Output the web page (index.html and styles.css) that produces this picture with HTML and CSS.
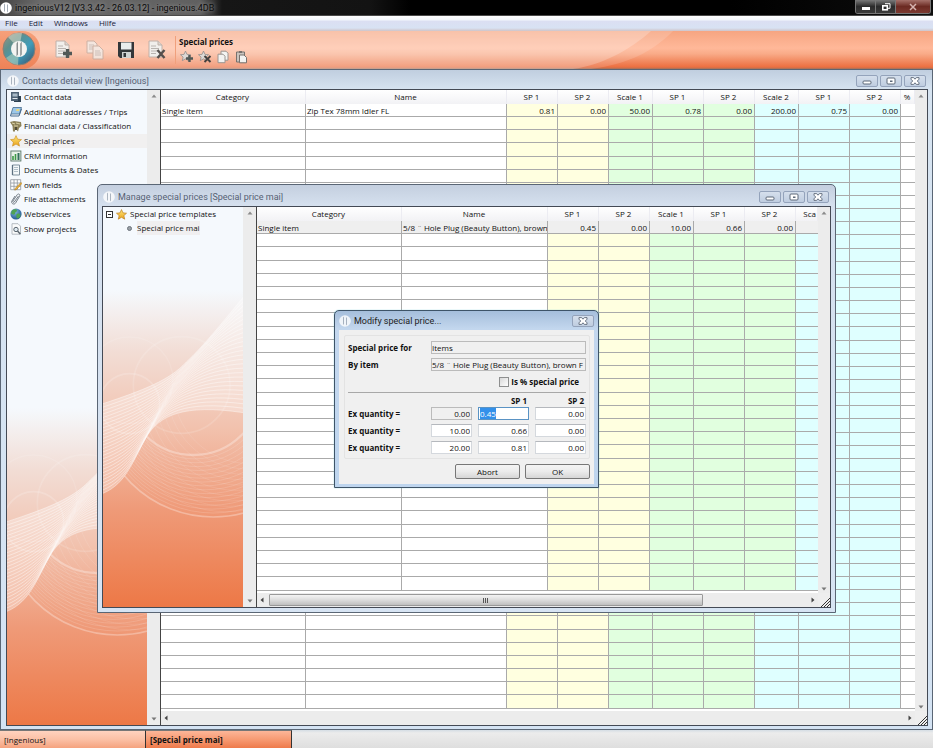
FILE: index.html
```html
<!DOCTYPE html>
<html lang="en">
<head>
<meta charset="utf-8">
<title>ingeniousV12 [V3.3.42 - 26.03.12] - ingenious.4DB</title>
<link rel="stylesheet" href="styles.css">
</head>
<body>
<svg class="defs" aria-hidden="true">
  <defs>
    <linearGradient id="disc" x1="0" y1="0" x2="1" y2="1"><stop offset="0" stop-color="#9a9a88"/><stop offset=".3" stop-color="#5f8f8c"/><stop offset=".6" stop-color="#3f9dbb"/><stop offset="1" stop-color="#3b4a62"/></linearGradient>
    <linearGradient id="gold" x1="0" y1="0" x2="0" y2="1"><stop offset="0" stop-color="#ffe87a"/><stop offset="1" stop-color="#e9a21c"/></linearGradient>
    <radialGradient id="globe" cx=".4" cy=".3" r=".8"><stop offset="0" stop-color="#7fb8e0"/><stop offset="1" stop-color="#154a86"/></radialGradient>
    <clipPath id="below"><path d="M0 619C70 590 90 520 130 450S240 350 421 377V960H0z"/></clipPath>
    <symbol id="mark" viewBox="0 0 12 12"><circle cx="6" cy="6" r="5.8" fill="#fff"/><path d="M5 1.500v7.500l-.8 1V2.500zM7.800 2v7.500l-.8 1V3z" fill="#8d98a5"/></symbol>
    <symbol id="page" viewBox="0 0 18 20"><path d="M1 1h9l4 4v12H1z" fill="#f1efec" stroke="#c0b0a8"/><path d="M10 1v4h4" fill="#dcd6d0" stroke="#c0b0a8"/><path d="M3 6h5M3 8.500h8M3 11h7M3 13.500h5" stroke="#b9b4b0"/></symbol>
    <symbol id="star" viewBox="0 0 12 12"><path d="M6 .6l1.600 3.600 3.900.4-2.900 2.600.9 3.900L6 9.100l-3.500 2 .9-3.900L.5 4.600l3.900-.4z"/></symbol>
    <symbol id="up" viewBox="0 0 6 4"><path d="M3 .5L5.500 3.500h-5z" fill="#8a8a8a"/></symbol>
    <symbol id="down" viewBox="0 0 6 4"><path d="M3 3.500L5.500.5h-5z" fill="#777"/></symbol>
    <symbol id="left" viewBox="0 0 4 6"><path d="M.5 3L3.500.5v5z" fill="#444"/></symbol>
    <symbol id="right" viewBox="0 0 4 6"><path d="M3.500 3L.5.5v5z" fill="#444"/></symbol>
    <symbol id="grip" viewBox="0 0 9 9"><path d="M0 9L9 0M3 9L9 3M6 9L9 6" stroke="#333" fill="none"/></symbol>
    <symbol id="min" viewBox="0 0 10 8"><rect x="1" y="4" width="8" height="3" rx="1" fill="#fff" stroke="#5c6878"/></symbol>
    <symbol id="max" viewBox="0 0 10 8"><rect x="1" y="1" width="8" height="6" rx="1" fill="#fff" stroke="#5c6878"/><rect x="4" y="3.500" width="2.500" height="1.500" fill="#5c6878"/></symbol>
    <symbol id="close" viewBox="0 0 10 8"><path d="M1 .6h2.600L5 2.200 6.400.6H9v1.600L7.300 4 9 5.800v1.600H6.400L5 5.800 3.600 7.400H1V5.800L2.700 4 1 2.200z" fill="#fff" stroke="#5c6878" stroke-width=".9"/></symbol>
  </defs>
</svg>

<header class="titlebar">
  <svg class="mark" aria-hidden="true"><use href="#mark"/></svg>
  <h1>ingeniousV12 [V3.3.42 - 26.03.12] - ingenious.4DB</h1>
  <div class="sysbuttons">
    <button type="button" aria-label="Minimize"><svg viewBox="0 0 10 8"><rect x="1" y="4" width="8" height="3" fill="#fff"/></svg></button>
    <button type="button" aria-label="Restore"><svg viewBox="0 0 10 8"><path d="M4 .7h5v4.600H7" fill="none" stroke="#fff"/><rect x="1.800" y="2.800" width="4.500" height="4" fill="none" stroke="#fff" stroke-width="1.600"/></svg></button>
    <button type="button" class="sysclose" aria-label="Close"><svg viewBox="0 0 10 8"><path d="M2 1l6 6M8 1L2 7" stroke="#d6b4b0" stroke-width="1.500"/></svg></button>
  </div>
</header>

<nav class="menubar" aria-label="Menu">
  <a href="#file">File</a><a href="#edit">Edit</a><a href="#windows">Windows</a><a href="#hilfe">Hilfe</a>
</nav>

<div class="toolbar">
  <svg class="gloss" viewBox="0 0 680 38" preserveAspectRatio="none" aria-hidden="true">
    <path d="M0 0h672C652 20 628 33 590 38H0z" fill="#fff" opacity=".14"/>
    <path d="M0 0h650C628 20 600 34 572 38H0z" fill="#fff" opacity=".22"/>
  </svg>
  <div class="home">
    <svg viewBox="0 0 34 34" aria-hidden="true"><circle cx="17" cy="17" r="16" fill="url(#disc)" stroke="#8b7f74"/><path d="M17 17L6 5a16 16 0 0 1 14-4z" fill="#e3e2d0" opacity=".5"/><path d="M17 17L4 26a16 16 0 0 0 12 7z" fill="#b3cdb5" opacity=".6"/><circle cx="17" cy="17" r="8" fill="#f4f4f2"/><path d="M15.800 9.500v13l-1.200 2V11.500zM19.600 9.500v13l-1.200 2V11.500z" fill="#6c7476"/></svg>
  </div>
  <div class="tools">
    <button type="button" aria-label="New"><svg viewBox="0 0 18 20"><use href="#page"/><path d="M12.500 9v9M8 13.500h9" stroke="#505856" stroke-width="3.400"/></svg></button>
    <button type="button" aria-label="Duplicate"><svg viewBox="0 0 18 20" class="faded"><path d="M1 1h7l3 3v9H1z" fill="#f1efec" stroke="#bfa99e"/><path d="M3 5h5M3 7h6M3 9h6" stroke="#bbb"/><path d="M7 6h6l4 4v9H7z" fill="#f1efec" stroke="#bfa99e"/><path d="M9 11h5M9 13h6M9 15h6" stroke="#bbb"/></svg></button>
    <button type="button" aria-label="Save"><svg viewBox="0 0 18 20"><path d="M1 2h16v16H3l-2-2z" fill="#33373a"/><path d="M4 2.500h10.500v7H4z" fill="#e9eded"/><path d="M5 12h9v6H5z" fill="#cfd3d3"/><path d="M6.500 13h2.500v4H6.500z" fill="#33373a"/></svg></button>
    <button type="button" aria-label="Delete"><svg viewBox="0 0 18 20"><use href="#page"/><path d="M9.500 10l7 8M16.500 10l-7 8" stroke="#55504d" stroke-width="2.400"/></svg></button>
  </div>
  <section class="group">
    <h2>Special prices</h2>
    <div class="minis">
      <button type="button" aria-label="Add special price"><svg viewBox="0 0 14 14"><use href="#star" width="11" height="12" fill="#ddd9d6" stroke="#8d8886" stroke-width=".8"/><path d="M9.500 5v7M6 8.500h7" stroke="#505856" stroke-width="2.400"/></svg></button>
      <button type="button" aria-label="Remove special price"><svg viewBox="0 0 14 14"><use href="#star" width="11" height="12" fill="#ddd9d6" stroke="#8d8886" stroke-width=".8"/><path d="M6.500 6l6 6M12.500 6l-6 6" stroke="#45413f" stroke-width="1.900"/></svg></button>
      <button type="button" aria-label="Copy"><svg viewBox="0 0 14 14"><path d="M5 1.200h5l2 2v7H5z" fill="#f3f3f1" stroke="#9a9490"/><path d="M2 4.200h5l2 2v6.500H2z" fill="#f3f3f1" stroke="#9a9490"/></svg></button>
      <button type="button" aria-label="Paste"><svg viewBox="0 0 14 14"><path d="M2.500 2h8v10h-8z" fill="#c9c3bd" stroke="#77716d"/><path d="M5 1h3v2H5z" fill="#77716d"/><path d="M5.500 5h4.500l2.500 2.500v5.300h-7z" fill="#f3f3f1" stroke="#77716d"/></svg></button>
    </div>
  </section>
</div>

<main class="workspace">
  <section class="window contacts">
    <header class="caption">
      <svg class="mark" aria-hidden="true"><use href="#mark"/></svg>
      <h2>Contacts detail view [Ingenious]</h2>
      <div class="winbuttons">
        <button type="button" aria-label="Minimize"><svg><use href="#min"/></svg></button>
        <button type="button" aria-label="Maximize"><svg><use href="#max"/></svg></button>
        <button type="button" aria-label="Close"><svg><use href="#close"/></svg></button>
      </div>
    </header>
    <div class="client">
      <nav class="side" aria-label="Sections">
        <svg class="swirl" viewBox="0 0 420 960" aria-hidden="true"></svg>
        <ul class="sections">
          <li><a href="#s1"><svg viewBox="0 0 12 12"><path d="M1 1h8v9H1z" fill="#4f6274"/><path d="M2.500 2.500h5v3h-5z" fill="#a9bac6"/><path d="M2.500 7h5v1h-5z" fill="#dfe6ea"/><path d="M8 5h3v6H4v-1h4z" fill="#2f4252"/></svg>Contact data</a></li>
          <li><a href="#s2"><svg viewBox="0 0 12 12"><path d="M3 1.500h8.500L9.500 8H1z" fill="#9cc7e8" stroke="#45698c" stroke-width=".8"/><path d="M1 8l-.5 2H9l2.500-7" fill="none" stroke="#45698c"/><path d="M6.500 3h3L9 5H6z" fill="#ecd87c"/></svg>Additional addresses / Trips</a></li>
          <li><a href="#s3"><svg viewBox="0 0 12 12"><path d="M0 2l4-1 7 1 .5 4L9 8l-1 3.500L5 8v3.500H3L2.500 6z" fill="#8c8158"/><path d="M2 3l3 1M6 3l4 1M4 6h4" stroke="#d9d0a4"/><path d="M5 7h2v3H5z" fill="#4f4a37"/></svg>Financial data / Classification</a></li>
          <li class="current"><a href="#s4" aria-current="page"><svg viewBox="0 0 12 12"><use href="#star" fill="url(#gold)" stroke="#c98a16" stroke-width=".6"/></svg>Special prices</a></li>
          <li><a href="#s5"><svg viewBox="0 0 12 12"><rect x=".9" y="1" width="10" height="10" fill="#e8f1e8" stroke="#5a7568" stroke-width=".9"/><path d="M3 6v4M5.500 4v6" stroke="#3d9a46" stroke-width="1.600"/><path d="M8.500 3v7" stroke="#34705c" stroke-width="2"/></svg>CRM information</a></li>
          <li><a href="#s6"><svg viewBox="0 0 12 12"><path d="M2.500 1h7v10h-7z" fill="#f4f8fa" stroke="#7d8f9c"/><path d="M4 3.500h4M4 5.500h4M4 7.500h4" stroke="#9fb0bb" stroke-width=".8"/><path d="M2.500 1v10" stroke="#5c7081" stroke-width="1.300"/></svg>Documents &amp; Dates</a></li>
          <li><a href="#s7"><svg viewBox="0 0 12 12"><path d="M.7.7h10v10H.7zM.7 4h10M.7 7.300h10M4 .7v10M7.300.7v10" fill="#fff" stroke="#8d949c" stroke-width=".8"/><path d="M11 3.500l.9.9L6.500 10.500l-1.800.6.5-1.700z" fill="#f0b63a" stroke="#a8741e" stroke-width=".6"/></svg>own fields</a></li>
          <li><a href="#s8"><svg viewBox="0 0 12 12"><path d="M8.500 3L4.300 9c-.6.900-2 .1-1.400-.9L7.200 1.700C8.200.2 10.600 1.400 9.600 3.200L5.600 10c-1.400 2.300-5 .5-3.700-2L5 3" fill="none" stroke="#68727c" stroke-width=".9"/></svg>File attachments</a></li>
          <li><a href="#s9"><svg viewBox="0 0 12 12"><circle cx="6" cy="6" r="5.600" fill="url(#globe)"/><path d="M2 2.500C4 .5 7 1 7 2.500S5 4 5 5.500 3 7 1 5.500zM7 6c2-1 3.500 0 3.500 1.500S8.500 10.500 7.500 10.500 5.500 7 7 6z" fill="#4ea353"/></svg>Webservices</a></li>
          <li><a href="#s10"><svg viewBox="0 0 12 12"><path d="M2 .7h6l2.500 2.500v8H2z" fill="#fafbfb" stroke="#a4acb3" stroke-width=".8"/><circle cx="6" cy="6.500" r="2.200" fill="#dfeaf1" stroke="#5c6770"/><path d="M7.500 8l2.800 3" stroke="#5c6770" stroke-width="1.500"/></svg>Show projects</a></li>
        </ul>
      </nav>
      <div class="vbar"><svg class="v"><use href="#up"/></svg><svg class="v"><use href="#down"/></svg></div>
      <div class="gridpane">
        <div class="sheet">
          <table data-blank="45">
            <colgroup><col class="w-cat"><col><col class="w-sp yellow"><col class="w-sp yellow"><col class="w-scale green"><col class="w-sp green"><col class="w-sp green"><col class="w-scale cyan"><col class="w-sp cyan"><col class="w-sp cyan"><col class="w-pct"></colgroup>
            <thead><tr><th>Category</th><th>Name</th><th>SP 1</th><th>SP 2</th><th>Scale 1</th><th>SP 1</th><th>SP 2</th><th>Scale 2</th><th>SP 1</th><th>SP 2</th><th>%</th></tr></thead>
            <tbody><tr><td class="text">Single item</td><td class="text">Zip Tex 78mm Idler FL</td><td>0.81</td><td>0.00</td><td>50.00</td><td>0.78</td><td>0.00</td><td>200.00</td><td>0.75</td><td>0.00</td><td></td></tr></tbody>
          </table>
        </div>
        <div class="vbar"><svg class="v"><use href="#up"/></svg><svg class="v"><use href="#down"/></svg></div>
        <div class="hbar"><svg class="h"><use href="#left"/></svg><svg class="h"><use href="#right"/></svg></div>
        <svg class="grip"><use href="#grip"/></svg>
      </div>
    </div>
  </section>

  <section class="window prices">
    <header class="caption">
      <svg class="mark" aria-hidden="true"><use href="#mark"/></svg>
      <h2>Manage special prices [Special price mai]</h2>
      <div class="winbuttons">
        <button type="button" aria-label="Minimize"><svg><use href="#min"/></svg></button>
        <button type="button" aria-label="Maximize"><svg><use href="#max"/></svg></button>
        <button type="button" aria-label="Close"><svg><use href="#close"/></svg></button>
      </div>
    </header>
    <div class="client">
      <div class="side">
        <svg class="swirl" viewBox="0 0 420 960" aria-hidden="true"></svg>
        <ul class="tree">
          <li><button type="button" class="toggle" aria-label="Collapse"><svg viewBox="0 0 7 7"><rect x=".5" y=".5" width="6" height="6" fill="#fff" stroke="#333"/><path d="M2 3.500h3" stroke="#333"/></svg></button><svg class="ico" viewBox="0 0 12 12"><use href="#star" fill="url(#gold)" stroke="#b9791a" stroke-width=".7"/></svg><span>Special price templates</span></li>
          <li class="child"><i class="dot"></i><span class="picked">Special price mai</span></li>
        </ul>
      </div>
      <div class="vbar"><svg class="v"><use href="#up"/></svg><svg class="v"><use href="#down"/></svg></div>
      <div class="gridpane">
        <div class="sheet">
          <table data-blank="27">
            <colgroup><col class="w-cat"><col><col class="w-sp yellow"><col class="w-sp yellow"><col class="w-scale green"><col class="w-sp green"><col class="w-sp green"><col class="w-cut cyan"></colgroup>
            <thead><tr><th>Category</th><th>Name</th><th>SP 1</th><th>SP 2</th><th>Scale 1</th><th>SP 1</th><th>SP 2</th><th class="cut">Sca</th></tr></thead>
            <tbody><tr class="selected"><td class="text">Single item</td><td class="text">5/8 ¨ Hole Plug (Beauty Button), brown</td><td>0.45</td><td>0.00</td><td>10.00</td><td>0.66</td><td>0.00</td><td></td></tr></tbody>
          </table>
        </div>
        <div class="vbar"><svg class="v"><use href="#up"/></svg><svg class="v"><use href="#down"/></svg></div>
        <div class="hbar"><svg class="h"><use href="#left"/></svg><div class="track"><div class="thumb"><i></i><i></i><i></i></div></div><svg class="h"><use href="#right"/></svg></div>
        <svg class="grip"><use href="#grip"/></svg>
      </div>
    </div>
  </section>

  <form class="dialog" role="dialog" aria-labelledby="dlg-title">
    <header class="caption">
      <svg class="mark" aria-hidden="true"><use href="#mark"/></svg>
      <h2 id="dlg-title">Modify special price...</h2>
      <div class="winbuttons"><button type="button" aria-label="Close"><svg><use href="#close"/></svg></button></div>
    </header>
    <div class="dlgbody">
      <div class="panel">
        <div class="line"><label for="for">Special price for</label><input id="for" class="ro" value="Items" readonly></div>
        <div class="line"><label for="item">By item</label><input id="item" class="ro" value="5/8 ¨ Hole Plug (Beauty Button), brown F" readonly></div>
        <div class="check"><input type="checkbox" id="pct"><label for="pct">Is % special price</label></div>
        <hr>
        <div class="qty heads"><span></span><span></span><b>SP 1</b><b>SP 2</b></div>
        <div class="qty"><label for="q1">Ex quantity =</label><input id="q1" class="ro" value="0.00" readonly><div class="editing" role="textbox" tabindex="0" contenteditable="true" aria-label="SP 1"><mark>0.45</mark></div><input aria-label="SP 2" value="0.00"></div>
        <div class="qty"><label for="q2">Ex quantity =</label><input id="q2" value="10.00"><input aria-label="SP 1" value="0.66"><input aria-label="SP 2" value="0.00"></div>
        <div class="qty"><label for="q3">Ex quantity =</label><input id="q3" value="20.00"><input aria-label="SP 1" value="0.81"><input aria-label="SP 2" value="0.00"></div>
      </div>
      <div class="actions"><button type="button">Abort</button><button type="submit">OK</button></div>
    </div>
  </form>
</main>

<footer class="taskbar">
  <button type="button">[Ingenious]</button><button type="button" class="active">[Special price mai]</button>
</footer>
<script src="app.js"></script>
</body>
</html>
```

FILE: styles.css
```css
* { box-sizing: border-box; }
html, body { height: 100%; }
body {
  margin: 0;
  display: flex;
  flex-direction: column;
  overflow: hidden;
  font: 8px/12px "Open Sans", "Noto Sans", sans-serif;
  color: #111;
  background: #c9d6e6;
}
h1, h2, ul { margin: 0; padding: 0; font: inherit; list-style: none; }
button, input { font: inherit; color: inherit; margin: 0; padding: 0; border: 0; background: none; min-width: 0; }
a { color: inherit; text-decoration: none; }
svg { display: block; flex: none; }
.defs { position: absolute; width: 0; height: 0; }
.mark { width: 12px; height: 12px; }

/* application frame */
.titlebar {
  flex: none;
  display: flex;
  align-items: center;
  gap: 3px;
  height: 16px;
  background: linear-gradient(90deg, #444 0, #6a6a6a 40px, #606060 200px, #161616 222px, #131313 370px, #000 410px, #000 730px, #0d0d0d);
  border-bottom: 1px solid #4a4a4a;
}
.titlebar h1 { flex: 1; font-family: Roboto, "Open Sans", sans-serif; font-size: 9px; color: #0a0a0a; text-shadow: 0 0 4px #aaa; }
.sysbuttons { display: flex; align-self: flex-start; height: 14px; margin-right: 2px; border: 1px solid #777; border-top: 0; border-radius: 0 0 3px 3px; overflow: hidden; }
.sysbuttons button { width: 20px; display: grid; place-items: center; background: linear-gradient(#7a7a7a, #2b2b2b 50%, #3b3b3b); border-right: 1px solid #777; }
.sysbuttons .sysclose { width: 34px; border: 0; background: linear-gradient(#a5716a, #6b2a22 50%, #7c3a31); }
.sysbuttons svg { width: 10px; height: 8px; }
.menubar {
  flex: none;
  display: flex;
  align-items: center;
  gap: 11px;
  height: 15px;
  padding: 0 5px 1px;
  background: linear-gradient(#fff 0, #f3f7fc 4px, #dbdff2 5px, #d8e2f3 12px, #cfc4c8);
  color: #1c1c3a;
}
.toolbar {
  flex: none;
  position: relative;
  display: flex;
  height: 38px;
  background: linear-gradient(#f6a581, #ffb899 45%, #f9ab88 60%, #ec6f40 95%, #a0715c);
}
.gloss { position: absolute; left: 0; top: 0; width: 73%; height: 100%; }
.home { position: relative; width: 40px; padding: 1px 0 0 2px; background: linear-gradient(#f6a07a, #ee8257); border-radius: 0 18px 18px 0; }
.home svg { width: 34px; height: 34px; }
.tools { position: relative; display: flex; align-items: center; gap: 13px; padding-left: 15px; }
.tools svg { width: 18px; height: 20px; }
.faded { opacity: .75; }
.group { position: relative; margin: 5px 0 5px 9px; padding-left: 3px; border-left: 1px solid #f0a07c; }
.group h2 { font-weight: 700; }
.minis { display: flex; gap: 4px; padding: 2px 0 0 1px; }
.minis svg { width: 14px; height: 14px; }

/* inner windows */
.workspace { flex: 1; position: relative; min-height: 0; display: flex; }
.window { display: flex; flex-direction: column; }
.contacts {
  flex: 1;
  min-width: 0;
  padding: 0 4px 3px 5px;
  border: 1px solid #5a6675;
  background: linear-gradient(#c0cedf, #d7e4f1 20px, #d4e3f3);
}
.prices {
  position: absolute;
  left: 97px;
  top: 115px;
  width: 739px;
  height: 429px;
  padding: 0 4px 4px;
  border: 1px solid #5a6675;
  border-radius: 5px 5px 0 0;
  background: linear-gradient(#c4cfdf, #d5e0ee 20px, #d7e4f3);
}
.caption { flex: none; display: flex; align-items: center; gap: 3px; height: 19px; padding: 2px 2px 0 1px; color: #566173; font-family: Roboto, "Open Sans", sans-serif; font-size: 9px; }
.caption .mark { opacity: .8; }
.prices .caption { height: 21px; padding-top: 3px; }
.caption h2 { flex: 1; font-size: inherit; }
.winbuttons { display: flex; gap: 2px; }
.winbuttons button { width: 22px; height: 12px; display: grid; place-items: center; border: 1px solid #94a3bb; border-radius: 2px; background: linear-gradient(#d5dfec, #bfcde0); }
.winbuttons svg { width: 10px; height: 8px; }
.client { flex: 1; min-height: 0; display: flex; background: #eee; border: 1px solid #444a55; }
.side { position: relative; flex: 0 0 140px; overflow: hidden; background: linear-gradient(0deg, #ed7846 0, #ef9a78 97px, #f2c2ae 180px, #f2ddd5 255px, #f5f9fd 317px); }
.swirl { position: absolute; left: 0; bottom: 0; width: 140px; height: 320px; fill: none; stroke: #fff; }
.sections { position: relative; display: grid; grid-auto-rows: 1fr; height: 146px; }
.sections a { display: flex; align-items: center; gap: 2px; height: 100%; padding-left: 3px; }
.sections svg { width: 12px; height: 12px; }
.current { background: #f1f0f0; }
.tree { position: relative; line-height: 14px; }
.tree li { display: flex; align-items: center; height: 14px; gap: 3px; padding-left: 3px; }
.tree .child { padding-left: 24px; gap: 5px; }
.toggle svg { width: 7px; height: 7px; }
.ico { width: 11px; height: 11px; }
.dot { width: 5px; height: 5px; border-radius: 50%; background: #9aa0a6; border: 1px solid #6c747c; }
.picked { background: #f0eff0; }
.vbar { flex: none; width: 13px; display: flex; flex-direction: column; justify-content: space-between; align-items: center; padding: 4px 0; background: #ececec; }
.v { width: 6px; height: 4px; }
.h { width: 4px; height: 6px; }
.gridpane { flex: 1; min-width: 0; display: grid; grid-template: minmax(0, 1fr) 14px / minmax(0, 1fr) 12px; border-left: 1px solid #444; position: relative; }
.gridpane .vbar { width: 12px; padding-bottom: 2px; }
.hbar { display: flex; align-items: center; justify-content: space-between; padding: 0 3px; background: #ececec; }
.grip { width: 9px; height: 9px; place-self: end; }
.track { flex: 1; height: 100%; padding: 1px 0 1px 5px; }
.thumb { width: 80%; height: 100%; display: flex; gap: 1px; align-items: center; justify-content: center; border: 1px solid #999; border-radius: 1px; background: linear-gradient(#f3f3f3, #dcdcdc 50%, #bfbfbf); }
.thumb i { width: 1px; height: 5px; background: #555; }

/* price tables */
.sheet { min-height: 0; overflow: hidden; background: #fff; padding-bottom: 2px; }
table { width: 100%; height: 100%; table-layout: fixed; border-collapse: separate; border-spacing: 0; }
.w-cat { width: 145px; }
.w-sp { width: 51px; }
.w-scale { width: 44px; }
.w-cut { width: 22px; }
.w-pct { width: 14px; }
.yellow { background: #ffffe0; }
.green { background: #e1ffdf; }
.cyan { background: #dfffff; }
th, td { line-height: 11px; white-space: nowrap; overflow: hidden; }
th { height: 14px; padding: 0 1px 1px 0; font-weight: 400; text-align: center; background: linear-gradient(#fff, #f2f2f5); border-right: 1px solid #ececf2; }
th.cut { text-align: right; }
td { height: 13px; padding: 0 2px 0 0; text-align: right; border-right: 1px solid #aaa; border-bottom: 1px solid #aaa; }
td:last-child { border-right: 0; }
td.text { text-align: left; padding: 0 0 0 1px; }
.selected td { background: #efefef; }

/* modal dialog */
.dialog {
  position: absolute;
  left: 334px;
  top: 241px;
  width: 265px;
  padding: 0 4px 3px;
  border: 1px solid #3e5468;
  border-radius: 5px 5px 0 0;
  background: linear-gradient(#a5bedb, #c3d7ee 18px, #bed5ee);
  box-shadow: 0 0 1px #38b8cc;
}
.dialog .caption { height: 19px; padding: 0; color: #222; }
.dlgbody { background: #f0f0f0; padding: 5px 4px 5px 5px; }
.panel { border: 1px solid #e3e3e3; border-radius: 2px; padding: 5px 3px 4px; display: grid; gap: 4px; }
.panel label, .panel b { font-weight: 700; }
.line { display: grid; grid-template-columns: 83px 155px; align-items: center; }
.panel input:not([type]), .editing { height: 13px; line-height: 11px; border: 1px solid #d4d8dd; border-top-color: #b5b8bd; background: #fff; padding: 0 1px; }
.line input.ro:not([type]) { padding: 0; }
.panel .ro:not([type]) { background: #f0f0f0; border-color: #bbb; }
.check { display: flex; align-items: center; justify-content: flex-end; gap: 2px; height: 13px; padding-right: 7px; }
.check input { appearance: none; width: 10px; height: 10px; border: 1px solid #8e8f8f; background: linear-gradient(135deg, #d8d8d8, #fff); }
hr { width: 100%; height: 1px; margin: 0; border: 0; background: #a8a8a8; }
.qty { display: grid; grid-template-columns: 77px 41px 51px 51px; column-gap: 6px; align-items: center; }
.qty input { text-align: right; width: 100%; }
.heads { height: 6px; line-height: 6px; padding-top: 1px; text-align: right; }
.heads b { padding-right: 2px; }
.editing { border-color: #5a93c4; outline: 0; }
mark { background: #3390ea; color: #fff; }
.actions { display: flex; justify-content: flex-end; gap: 5px; padding-top: 5px; }
.actions button { width: 65px; height: 15px; border: 1px solid #777; border-radius: 2px; background: linear-gradient(#f4f4f4, #ebebeb 50%, #d6d6d6); }

/* window switcher */
.taskbar { flex: none; display: flex; height: 18px; background: linear-gradient(#d5dde4, #ececec 3px, #dedede); }
.taskbar button { width: 146px; padding-left: 4px; text-align: left; border-right: 1px solid #333; border-top: 1px solid #777; background: linear-gradient(#ffd3bf, #fbc0a5 50%, #f5a27e); }
.taskbar .active { font-weight: 700; background: linear-gradient(#fdb698, #f79a72 50%, #ee7a4b); }
```

FILE: app.js
```js
// Fill each price table with empty rows.
document.querySelectorAll('table[data-blank]').forEach(function (table) {
  var cols = table.querySelectorAll('col').length;
  var body = table.tBodies[0];
  for (var r = 0; r < Number(table.dataset.blank); r++) {
    var row = body.insertRow();
    for (var c = 0; c < cols; c++) row.insertCell();
  }
});

// Ribbon and ring artwork at the foot of the side panels.
var upper = [[0, 350], [120, 310], [200, 280], [250, 225], [300, 180], [380, 80], [421, 30]];
var lower = [[0, 619], [70, 590], [90, 520], [130, 450], [170, 385], [240, 350], [421, 377]];
function ribbon(t) {
  var p = upper.map(function (a, i) {
    return (a[0] + (lower[i][0] - a[0]) * t).toFixed(1) + ' ' + (a[1] + (lower[i][1] - a[1]) * t).toFixed(1);
  });
  return 'M' + p[0] + 'C' + p.slice(1).join(' ');
}
function ring(x, y, r, w, o) {
  return '<circle cx="' + x + '" cy="' + y + '" r="' + r + '" stroke-width="' + w + '" opacity="' + o + '"/>';
}
var art = '';
for (var i = 0; i <= 26; i++) art += '<path d="' + ribbon(i / 26) + '" stroke-width="3" opacity=".42"/>';
art += '<path d="' + ribbon(0) + 'L' + lower.slice().reverse().map(function (p, n) { return (n === 1 ? 'C' : '') + p.join(' '); }).join(' ') + 'Z" fill="#fff" stroke="none" opacity=".32"/>';
art += '<g clip-path="url(#below)">';
for (var k = 1; k < 16; k++) art += ring(271 + 4 * k, 299 + 2.6 * k, 205 + 9 * k, 3, 0.14);
for (var m = 0; m < 10; m++) art += ring(440 - 8 * m, 300 + 6 * m, 230 + 10 * m, 3, 0.1);
art += ring(331, 340, 350, 5, 0.3) + ring(271, 299, 205, 7, 0.3) + '</g>';
art += ring(236, 294, 145, 5, 0.14) + ring(80, 350, 90, 5, 0.18) + ring(80, 280, 130, 4, 0.12);
document.querySelectorAll('.swirl').forEach(function (svg) { svg.innerHTML = art; });
```
